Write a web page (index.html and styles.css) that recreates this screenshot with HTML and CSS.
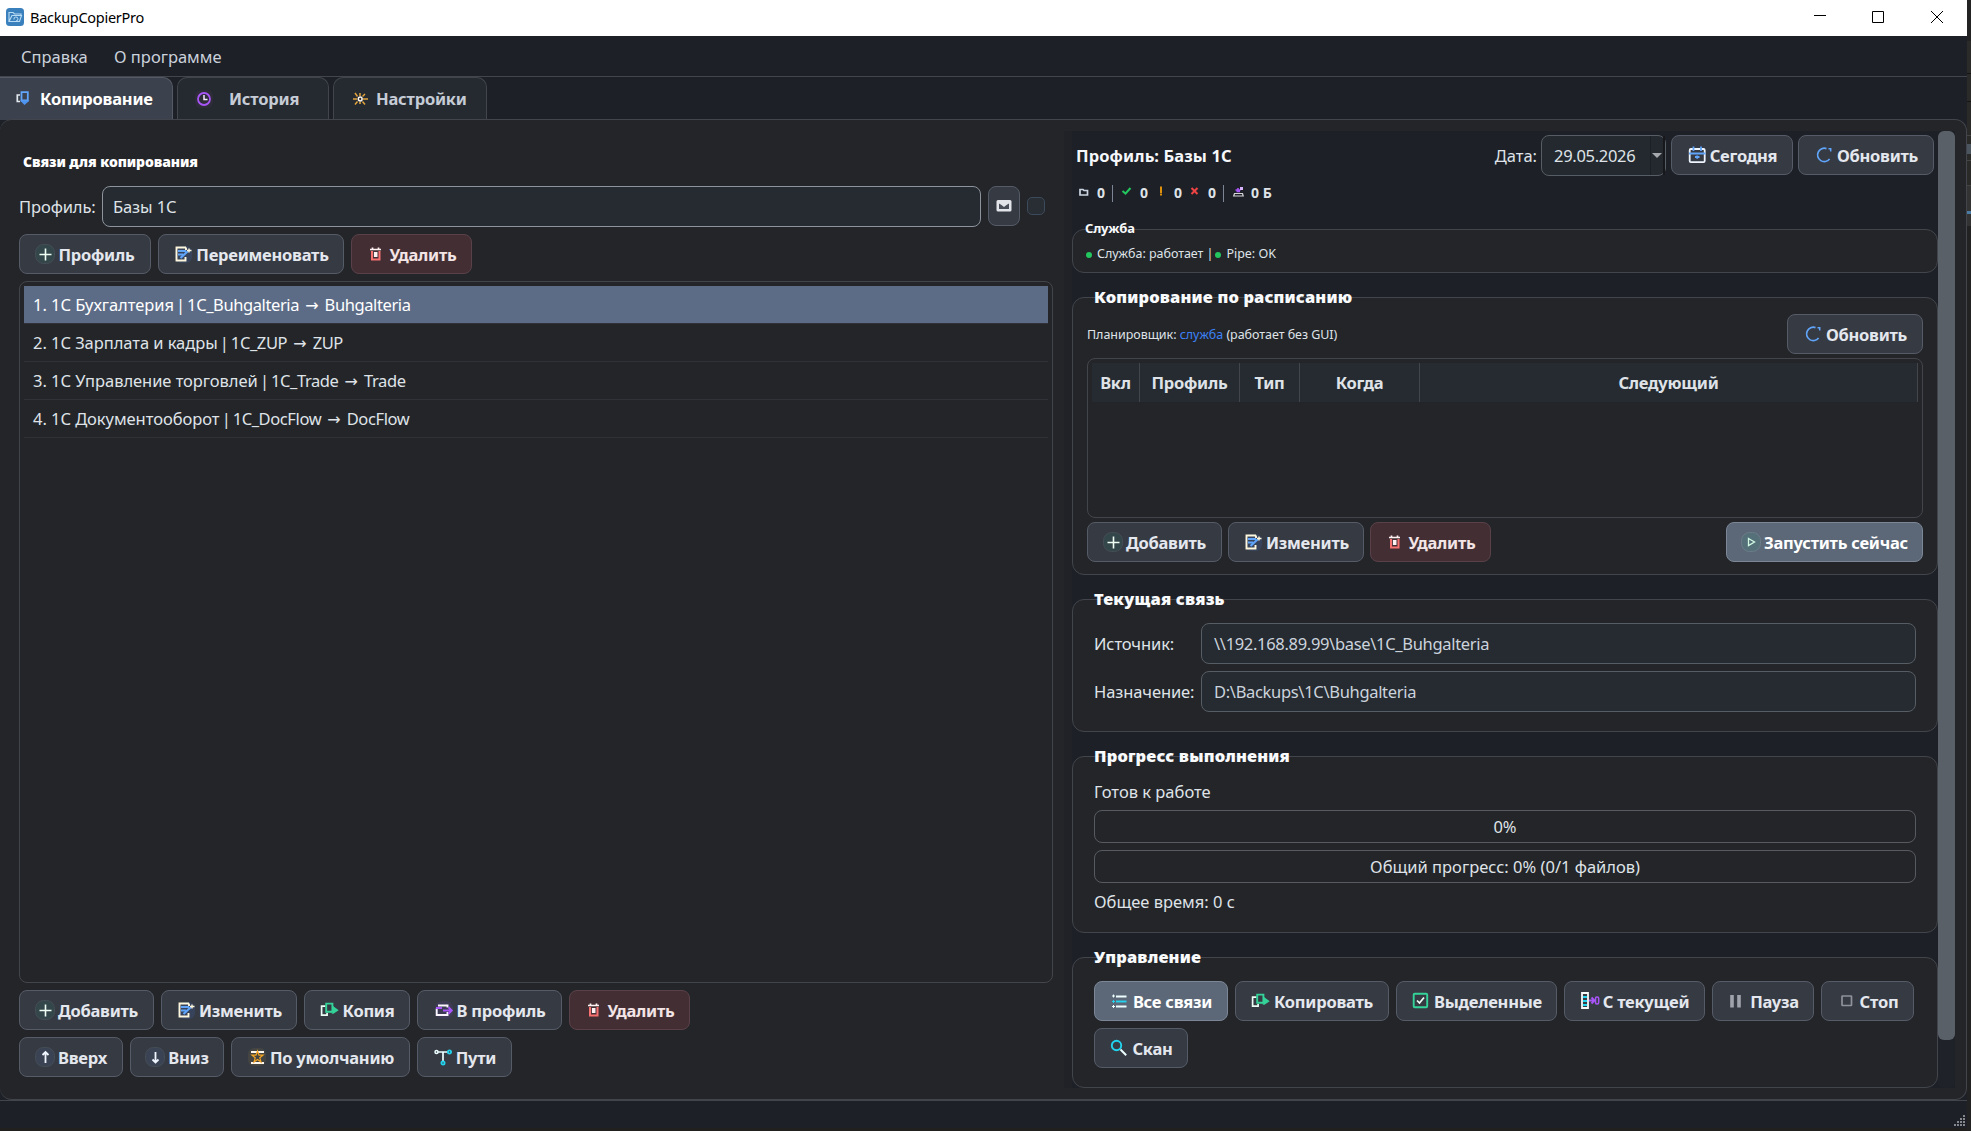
FILE: index.html
```html
<!DOCTYPE html>
<html lang="ru">
<head>
  <meta charset="UTF-8" />
  <title>BackupCopierPro</title>
  <link rel="stylesheet" href="styles.css">
</head>
<body>

  <svg class="sprite" aria-hidden="true">
    <symbol id="i-plus" viewBox="0 0 20 20"><rect x=".5" y=".5" width="19" height="19" rx="8" fill="#33464a" stroke="#454d55"/><path d="M4.500 10.500h12M10.500 4.500v12" stroke="#f0fdf4" stroke-width="1.600"/></symbol>
    <symbol id="i-edit" viewBox="0 0 20 20"><rect x="2" y="2" width="17" height="17" rx="6" fill="#37435a"/><path d="M13 3.500H3.500v13h9V13M13 3.500V6" fill="none" stroke="#fff7dc" stroke-width="1.900"/><path d="M5 7h8M5 10.500h5" stroke="#60a5fa" stroke-width="2"/><path d="M7.500 14l7.500-7" stroke="#60a5fa" stroke-width="2.200"/><path d="M14 6.500h4.500M16 4.500v4" stroke="#fff7dc" stroke-width="1.400"/></symbol>
    <symbol id="i-trash" viewBox="0 0 20 20"><path d="M4 5.500h11M6.500 3.500v2M12.500 3.500v2" stroke="#fff1f2" stroke-width="1.700"/><path d="M6 7v8.500h7.500V7" fill="none" stroke="#f87171" stroke-width="2"/><path d="M9.700 8v5" stroke="#fff1f2" stroke-width="3.600"/></symbol>
    <symbol id="i-copy" viewBox="0 0 20 20"><path d="M5.500 6.200H1.600v9h5.500v-2.500" fill="none" stroke="#ecfdf5" stroke-width="1.700"/><path d="M6.200 3.600h6.200v8.200H6.200z" fill="none" stroke="#34d399" stroke-width="1.900"/><path d="M13 6l5.700 4.300-5.700 3.700-2.500-1.500h2.500z" fill="#34d399"/></symbol>
    <symbol id="i-move" viewBox="0 0 20 20"><rect x="1" y="1" width="18" height="18" rx="7" fill="#3d3c54"/><path d="M4 5.500h9.500v2M2.700 8.500v6.500h10.800v-3" fill="none" stroke="#faf5ff" stroke-width="1.900"/><path d="M2 8h6M9 10.500h9M14.500 7.300l3.200 3.200-3.200 3.200" fill="none" stroke="#a855f7" stroke-width="2"/></symbol>
    <symbol id="i-up" viewBox="0 0 20 20"><rect x=".5" y=".5" width="19" height="19" rx="8" fill="#3a4354" stroke="#454d55"/><path d="M10.500 16V5M7.500 8l3-3 3 3" fill="none" stroke="#f0f6ff" stroke-width="1.800"/></symbol>
    <symbol id="i-down" viewBox="0 0 20 20"><rect x=".5" y=".5" width="19" height="19" rx="8" fill="#3a4354" stroke="#454d55"/><path d="M10.500 5v11M7.500 12.500l3 3 3-3" fill="none" stroke="#f0f6ff" stroke-width="1.800"/></symbol>
    <symbol id="i-default" viewBox="0 0 20 20"><rect x="1" y="1" width="18" height="18" rx="6" fill="#444443"/><path d="M4 5h13M4 16h13" stroke="#fff7ed" stroke-width="1.800"/><path d="M10.500 4l1.500 4.200h4l-3.200 2.600 1.200 4.200-3.500-2.500L7 15l1.200-4.200L5 8.200h4z" fill="#444443" stroke="#f5a524" stroke-width="1.200"/></symbol>
    <symbol id="i-paths" viewBox="0 0 20 20"><path d="M3 5h14M10 5v10" stroke="#ecfeff" stroke-width="1.700"/><circle cx="3.500" cy="5" r="1.500" fill="#363a43" stroke="#ecfeff" stroke-width="1.500"/><circle cx="16.500" cy="5" r="1.600" fill="#363a43" stroke="#22d3ee" stroke-width="1.800"/><circle cx="10" cy="16" r="1.600" fill="#363a43" stroke="#22d3ee" stroke-width="1.800"/></symbol>
    <symbol id="i-calendar" viewBox="0 0 20 20"><rect x="2.700" y="4" width="15" height="13.200" rx="1.200" fill="none" stroke="#eff6ff" stroke-width="1.800"/><path d="M6.500 1.500V6M14 1.500V6M2 8.500h16.500M8 12h4.500M10.200 10.500v3.200" stroke="#60a5fa" stroke-width="1.800"/></symbol>
    <symbol id="i-refresh" viewBox="0 0 20 20"><path d="M12.500 3.600A6.700 6.700 0 1 0 15.600 14" fill="none" stroke="#60a5fa" stroke-width="1.700"/><path d="M14.500 3.800h2.200v2.700" fill="none" stroke="#60a5fa" stroke-width="1.500"/></symbol>
    <symbol id="i-play" viewBox="0 0 20 20"><rect x=".5" y=".5" width="19" height="19" rx="8" fill="#557078" stroke="#6b7c88"/><path d="M7.500 6.500l6 3.500-6 3.500z" fill="#557078" stroke="#d1fae5" stroke-width="1.300"/></symbol>
    <symbol id="i-list" viewBox="0 0 20 20"><path d="M6 5.500h10.500M6 15.500h10.500" stroke="#ecfeff" stroke-width="1.900"/><path d="M6 10.500h10.500" stroke="#22d3ee" stroke-width="1.900"/><path d="M2 5h3M3.500 3.500v3M2 15.500h3M3.500 14v3" stroke="#ecfeff"/><path d="M2 10.500h3M3.500 9v3" stroke="#22d3ee"/></symbol>
    <symbol id="i-checkbox" viewBox="0 0 20 20"><rect x="2.700" y="2.700" width="13.500" height="13.500" rx="1" fill="none" stroke="#34d399" stroke-width="1.900"/><path d="M6 9.500l2.500 2.500L13 6.500" fill="none" stroke="#ecfdf5" stroke-width="1.700"/></symbol>
    <symbol id="i-current" viewBox="0 0 20 20"><path d="M2 2h6v15H2z" fill="#363a43" stroke="#f8fafc" stroke-width="1.800"/><path d="M3 6h4M3 10h4M3 14h4" stroke="#22d3ee" stroke-width="2"/><path d="M9 9.500h6M11.500 6.500l3 3-3 3" fill="none" stroke="#a855f7" stroke-width="1.900"/><rect x="15.500" y="6" width="3.200" height="7" rx="1.500" fill="none" stroke="#a855f7" stroke-width="1.500"/></symbol>
    <symbol id="i-pause" viewBox="0 0 20 20"><path d="M5 4v12.500M12 4v12.500" stroke="#a0a3ab" stroke-width="3.600" stroke-linecap="butt"/></symbol>
    <symbol id="i-stop" viewBox="0 0 20 20"><rect x="5" y="5" width="9.500" height="9.500" rx=".5" fill="none" stroke="#8f929b" stroke-width="1.700"/></symbol>
    <symbol id="i-search" viewBox="0 0 20 20"><circle cx="7.500" cy="7.500" r="4.700" fill="none" stroke="#22d3ee" stroke-width="1.900"/><path d="M11.500 11.500l5.700 5.700" stroke="#ecfeff" stroke-width="2"/></symbol>
    <symbol id="i-mail" viewBox="0 0 20 20"><rect x="2.500" y="4" width="15" height="11.500" rx="1.500" fill="#e2e4ea"/><path d="M5 7.500l2.500 1.500L10 11l2.500-2L15 7.500v5.500H5z" fill="#4a4e58"/></symbol>
    <symbol id="i-tab-copy" viewBox="0 0 20 20"><path d="M7 7H4.300v6.500H7" fill="none" stroke="#e2e8f0" stroke-width="1.700"/><path d="M8.500 4.200h6.300v8.300H8.500z" fill="none" stroke="#60a5fa" stroke-width="1.800"/><path d="M7 12.500h9.500L11.500 17z" fill="#4f93f0"/></symbol>
    <symbol id="i-history" viewBox="0 0 20 20"><rect x="1" y="1" width="18" height="18" rx="6" fill="#2e2c38"/><circle cx="10" cy="10" r="6" fill="none" stroke="#a855f7" stroke-width="1.800"/><path d="M10 6v4.500h3.500" fill="none" stroke="#f3e8ff" stroke-width="1.500"/></symbol>
    <symbol id="i-settings" viewBox="0 0 20 20"><path d="M10 7V4M10 13v2M7 10H3M13 10h5M7.500 7.500l-2.500-3.500M12.500 7.500l2.500-2.500M7.500 12.500l-2.500 3M12.500 12.500l2.500 3" stroke="#e0a23c" stroke-width="1.500"/><circle cx="10.200" cy="10" r="1.900" fill="#252a31" stroke="#fff7ed" stroke-width="1.500"/></symbol>
  </svg>

  <div class="desktop">
    <div class="window">
      <header class="titlebar">
        <svg class="app-icon" viewBox="0 0 18 18"><rect width="18" height="18" rx="3.500" fill="#3a80bd"/><path d="M3 13.500V4.500h4l1.500 1.500H15v2M3 13.500l3-6h9.500l-2 6z" fill="none" stroke="#b9dcf5" stroke-width="1.100"/><path d="M8 11.500a2 2 0 1 1 2 1.500" fill="none" stroke="#b9dcf5"/></svg>
        <span class="app-name">BackupCopierPro</span>
        <div class="window-controls">
          <svg viewBox="0 0 12 12"><path d="M0 4.500h12" /></svg>
          <svg viewBox="0 0 12 12"><path d="M.5 .5h11v11H.5z" /></svg>
          <svg viewBox="0 0 12 12"><path d="M0 0l12 12M12 0L0 12" /></svg>
        </div>
      </header>

      <nav class="menubar">
        <span class="menu-help">Справка</span>
        <span class="menu-about">О программе</span>
      </nav>

      <div class="tabs">
        <div class="tab tab-copy active"><svg class="icon"><use href="#i-tab-copy"/></svg><span>Копирование</span></div>
        <div class="tab tab-history"><svg class="icon"><use href="#i-history"/></svg><span>История</span></div>
        <div class="tab tab-settings"><svg class="icon"><use href="#i-settings"/></svg><span>Настройки</span></div>
      </div>

      <main class="page">
        <section class="links">
          <h1 class="links-title">Связи для копирования</h1>
          <div class="profile-row">
            <label>Профиль:</label>
            <div class="field profile-select">Базы 1С</div>
            <button class="btn btn-mail"><svg class="icon"><use href="#i-mail"/></svg></button>
            <span class="checkbox"></span>
          </div>
          <div class="btn-row">
            <button class="btn" style="width:132px"><svg class="icon"><use href="#i-plus"/></svg>Профиль</button>
            <button class="btn" style="width:186px"><svg class="icon"><use href="#i-edit"/></svg>Переименовать</button>
            <button class="btn danger" style="width:121px"><svg class="icon"><use href="#i-trash"/></svg>Удалить</button>
          </div>
          <ul class="link-list">
            <li class="selected">1. 1С Бухгалтерия <i>|</i> <span>1C_Buhgalteria</span> <b>→</b> <span>Buhgalteria</span></li>
            <li>2. 1С Зарплата и кадры <i>|</i> <span>1C_ZUP</span> <b>→</b> <span>ZUP</span></li>
            <li>3. 1С Управление торговлей <i>|</i> <span>1C_Trade</span> <b>→</b> <span>Trade</span></li>
            <li>4. 1С Документооборот <i>|</i> <span>1C_DocFlow</span> <b>→</b> <span>DocFlow</span></li>
          </ul>
          <div class="btn-row">
            <button class="btn" style="width:135px"><svg class="icon"><use href="#i-plus"/></svg>Добавить</button>
            <button class="btn" style="width:136px"><svg class="icon"><use href="#i-edit"/></svg>Изменить</button>
            <button class="btn" style="width:106px"><svg class="icon"><use href="#i-copy"/></svg>Копия</button>
            <button class="btn" style="width:145px"><svg class="icon"><use href="#i-move"/></svg>В профиль</button>
            <button class="btn danger" style="width:121px"><svg class="icon"><use href="#i-trash"/></svg>Удалить</button>
          </div>
          <div class="btn-row">
            <button class="btn" style="width:104px"><svg class="icon"><use href="#i-up"/></svg>Вверх</button>
            <button class="btn" style="width:94px"><svg class="icon"><use href="#i-down"/></svg>Вниз</button>
            <button class="btn" style="width:179px"><svg class="icon"><use href="#i-default"/></svg>По умолчанию</button>
            <button class="btn" style="width:95px"><svg class="icon"><use href="#i-paths"/></svg>Пути</button>
          </div>
        </section>

        <section class="details">
          <div class="details-content">
            <div class="details-head">
              <h2 class="profile-name">Профиль: Базы 1С</h2>
              <label>Дата:</label>
              <div class="field date-field"><span>29.05.2026</span><i class="date-drop"></i></div>
              <button class="btn" style="width:122px"><svg class="icon"><use href="#i-calendar"/></svg>Сегодня</button>
              <button class="btn" style="width:136px"><svg class="icon"><use href="#i-refresh"/></svg>Обновить</button>
            </div>

            <div class="stats">
              <svg viewBox="0 0 14 14"><path d="M2 4.500V10h7.500V5.500H6L5 4.500z" fill="none" stroke="#cbd5e1" stroke-width="1.700"/></svg>
              <b>0</b>
              <i class="sep"></i>
              <svg viewBox="0 0 14 14"><path d="M1.500 6l3 2.500 5-5.500" fill="none" stroke="#22c55e" stroke-width="2"/></svg>
              <b>0</b>
              <svg viewBox="0 0 14 14"><path d="M4 1.500v6.500M4 8.500v2" stroke="#f59e0b" stroke-width="1.800"/></svg>
              <b>0</b>
              <svg viewBox="0 0 14 14"><path d="M1.500 3l6 6M7.500 3l-6 6" stroke="#ef4444" stroke-width="2"/></svg>
              <b>0</b>
              <i class="sep"></i>
              <svg viewBox="0 0 14 14"><path d="M2.500 8.500h8l.7 2.500H1.700z" fill="none" stroke="#d4d4d8" stroke-width="1.200"/><path d="M3.500 5h5M6 3v4M8 6.500H4.500" stroke="#a855f7" stroke-width="1.600"/><path d="M8 2h3v3H8z" fill="#d8b4fe"/></svg>
              <b>0 Б</b>
            </div>

            <div class="group group-service">
              <h3>Служба</h3>
              <p><i class="dot"></i><span>Служба: работает |</span><i class="dot"></i><span>Pipe: OK</span></p>
            </div>

            <div class="group group-schedule">
              <h3>Копирование по расписанию</h3>
              <div class="schedule-head">
                <p>Планировщик: <a>служба</a> (работает без GUI)</p>
                <button class="btn" style="width:136px"><svg class="icon"><use href="#i-refresh"/></svg>Обновить</button>
              </div>
              <div class="schedule-table">
                <div class="table-head">
                  <span>Вкл</span><span>Профиль</span><span>Тип</span><span>Когда</span><span>Следующий</span>
                </div>
              </div>
              <div class="btn-row">
                <button class="btn" style="width:135px"><svg class="icon"><use href="#i-plus"/></svg>Добавить</button>
                <button class="btn" style="width:136px"><svg class="icon"><use href="#i-edit"/></svg>Изменить</button>
                <button class="btn danger" style="width:121px"><svg class="icon"><use href="#i-trash"/></svg>Удалить</button>
                <button class="btn primary run-now" style="width:197px"><svg class="icon"><use href="#i-play"/></svg>Запустить сейчас</button>
              </div>
            </div>

            <div class="group group-link">
              <h3>Текущая связь</h3>
              <div class="path-form">
                <label>Источник:</label>
                <div class="field">\\192.168.89.99\base\1C_Buhgalteria</div>
                <label>Назначение:</label>
                <div class="field">D:\Backups\1C\Buhgalteria</div>
              </div>
            </div>

            <div class="group group-progress">
              <h3>Прогресс выполнения</h3>
              <p class="status">Готов к работе</p>
              <div class="progress">0%</div>
              <div class="progress">Общий прогресс: 0% (0/1 файлов)</div>
              <p class="time">Общее время: 0 с</p>
            </div>

            <div class="group group-control">
              <h3>Управление</h3>
              <div class="btn-row">
                <button class="btn primary" style="width:134px"><svg class="icon"><use href="#i-list"/></svg>Все связи</button>
                <button class="btn" style="width:154px"><svg class="icon"><use href="#i-copy"/></svg>Копировать</button>
                <button class="btn" style="width:161px"><svg class="icon"><use href="#i-checkbox"/></svg>Выделенные</button>
                <button class="btn" style="width:141px"><svg class="icon"><use href="#i-current"/></svg>С текущей</button>
                <button class="btn" style="width:102px"><svg class="icon"><use href="#i-pause"/></svg>Пауза</button>
                <button class="btn" style="width:93px"><svg class="icon"><use href="#i-stop"/></svg>Стоп</button>
                <button class="btn" style="width:94px"><svg class="icon"><use href="#i-search"/></svg>Скан</button>
              </div>
            </div>
          </div>
          <div class="scrollbar"><div class="thumb"></div></div>
        </section>
      </main>

      <footer class="statusbar">
        <svg class="grip" viewBox="0 0 12 12"><path d="M9 1h2M6 4h2M9 4h2M3 7h2M6 7h2M9 7h2M0 10h2M3 10h2M6 10h2M9 10h2" stroke="#85878c" stroke-width="2"/></svg>
      </footer>
    </div>
    <div class="behind"></div>
  </div>

</body>
</html>
```
FILE: styles.css
```css
* { box-sizing: border-box; }
body { margin: 0; background: #221f1f; color: #dfe3e8; font-family: "Noto Sans", "Open Sans", sans-serif; font-size: 16.5px; overflow: hidden; }
h1, h2, h3, p, ul { margin: 0; padding: 0; }
.sprite { display: none; }
.icon { width: 20px; height: 20px; flex: none; }

.desktop { display: flex; height: 1131px; }
.window { width: 1967px; height: 1128px; display: flex; flex-direction: column; background: #1d2027; }
.behind { width: 4px; height: 1131px; background: linear-gradient(#232323 0 41px, #2b2b2a 41px 73px, #161616 73px 74px, #2b2b2a 74px 101px, #161616 101px 102px, #2a2a29 102px 135px, #444 135px 136px, #2a2a29 136px 144px, #4a5560 144px 154px, #2a2a29 154px 160px, #444 160px 161px, #2a2a29 161px 185px, #444 185px 186px, #333 186px 211px, #4a7ba5 211px 214px, #333 214px 226px, #222 226px); }

/* title bar and menu */
.titlebar { height: 36px; flex: none; background: #fff; color: #000; display: flex; align-items: center; padding: 0 24px 2px 6px; }
.app-icon { width: 18px; height: 18px; }
.app-name { margin-left: 6px; font-size: 14.5px; letter-spacing: -0.28px; }
.window-controls { margin-left: auto; display: flex; gap: 47px; }
.window-controls svg { width: 12px; height: 12px; fill: none; stroke: #000; overflow: visible; }
.window-controls svg:nth-child(2) { margin-left: -1px; }
.menubar { height: 41px; flex: none; border-bottom: 1px solid #42454b; display: flex; align-items: center; padding-left: 21px; color: #cbd2dc; }
.menubar span { white-space: nowrap; }
.menu-help { width: 93px; }

.tabs { display: flex; gap: 4px; height: 42px; flex: none; }
.tab { display: flex; align-items: center; height: 42px; border: 1px solid #42464c; border-bottom: none; border-radius: 10px 10px 0 0; background: #252a31; color: #c6ccd6; font-weight: 700; font-size: 16.5px; letter-spacing: -0.22px; white-space: nowrap; }
.tab.active { background: #3c424d; border-color: #555b66; color: #fff; height: 43px; border-left: none; border-top-left-radius: 0; padding-bottom: 2px; }
.tab-copy { width: 173px; padding-left: 13px; gap: 7px; }
.tab-history { width: 152px; padding-left: 16px; gap: 15px; }
.tab-settings { width: 154px; padding-left: 16px; gap: 6px; }

.page { flex: 1; display: flex; background: #242529; border: 1px solid #42454b; border-left: none; border-radius: 12px; padding: 11px 11px 11px 19px; min-height: 0; }

/* buttons and fields */
.btn { height: 40px; display: inline-flex; align-items: center; justify-content: center; gap: 3px; padding: 0; border: 1px solid #555c67; border-radius: 8px; background: #363a43; color: #e4e8ee; font-family: inherit; font-size: 16.5px; font-weight: 700; letter-spacing: -0.25px; white-space: nowrap; flex: none; }
.btn.danger { background: #432f33; border-color: #5a4149; color: #f3e4e6; }
.btn.primary { background: #5c6878; border-color: #7b8797; color: #fff; }
.btn-row { display: flex; flex-wrap: wrap; gap: 7px; }
.field { height: 41px; display: flex; align-items: center; border: 1px solid #575d64; border-radius: 8px; background: #252b31; padding-left: 12px; white-space: nowrap; }

/* left column */
.links { width: 1034px; display: flex; flex-direction: column; }
.links-title { height: 22px; margin: 20px 0 13px 4px; line-height: 22px; font-size: 14px; font-weight: 900; letter-spacing: -0.1px; color: #fff; }
.profile-row { display: flex; height: 41px; margin-bottom: 7px; }
.profile-row label { width: 83px; line-height: 41px; letter-spacing: -0.1px; }
.profile-select { width: 879px; border-color: #8d949d; padding-left: 10px; letter-spacing: -0.1px; }
.btn-mail { width: 32px; margin: 0 7px; }
.checkbox { width: 18px; height: 18px; margin-top: 11px; border: 1px solid #3c4a5c; border-radius: 5px; background: #292e35; }
.link-list { list-style: none; height: 702px; margin: 7px 0; padding: 4px; border: 1px solid #42454b; border-radius: 8px; }
.link-list li { height: 38px; line-height: 37px; padding-left: 9px; border-bottom: 1px solid #303238; letter-spacing: -0.05px; }
.link-list li span { letter-spacing: -0.4px; }
.link-list li i { margin: 0 -2.3px 0 -2px; font-style: normal; }
.link-list li b { display: inline-block; width: 17px; line-height: 20px; text-align: center; font-family: "DejaVu Sans", sans-serif; font-size: 16px; font-weight: 400; }
.link-list .selected { background: #5c6c87; color: #fff; }
.links .btn-row + .btn-row { margin-top: 7px; }

/* right column */
.details { display: flex; width: 891px; margin-left: 11px; background: #1d2027; border-left: 8px solid #202228; }
.details-content { width: 866px; }
.details-head { display: flex; align-items: center; height: 41px; margin-top: 4px; padding: 0 4px; }
.profile-name { flex: 1; font-size: 16.5px; font-weight: 700; color: #f5f7fa; letter-spacing: 0.1px; }
.details-head .btn { align-self: flex-start; }
.details-head .btn + .btn { margin-left: 5px; }
.date-field { width: 125px; margin: 0 5px 0 4px; padding-left: 12px; justify-content: space-between; background: #24292f; letter-spacing: -0.3px; }
.date-drop { width: 15px; height: 39px; border-right: 2px solid #16181b; border-left: 1px solid #1c1f23; display: flex; align-items: center; justify-content: center; }
.date-drop::after { content: ""; border: 5px solid transparent; border-top-color: #a5a8ac; border-bottom: none; }
.stats { display: grid; grid-template-columns: 19px 15px 9px 19px 17px 17px 16px 18px 15px 9px 19px auto; align-items: center; height: 20px; margin: 6px 0 0 6px; font-size: 14px; }
.stats svg { width: 14px; height: 14px; }
.stats b { font-weight: 700; white-space: nowrap; }
.sep { width: 1px; height: 17px; background: #7d8594; margin-top: 3px; }

.group { border: 1px solid #42454b; border-radius: 12px; background: #242529; padding: 0 21px; }
.group h3 { height: 24px; line-height: 24px; margin-top: -13px; font-size: 16.5px; font-weight: 900; letter-spacing: 0.15px; color: #f8fafc; white-space: nowrap; }
.group-service { height: 44px; margin-top: 27px; padding: 0 12px; }
.group-service h3 { font-size: 13px; font-weight: 700; line-height: 23px; letter-spacing: -0.2px; }
.group-service p { display: flex; align-items: center; height: 24px; margin-top: 0; font-size: 12.5px; letter-spacing: -0.03px; }
.dot { width: 6px; height: 6px; border-radius: 3px; background: #22c55e; margin: 4px 5px 0 1px; }
.group-service span + .dot { margin-left: 2px; }
.group-schedule { height: 278px; margin-top: 24px; padding: 0 14px; }
.group-schedule h3 { padding-left: 7px; }
.group-schedule .btn-row { gap: 6px; }
.schedule-head { display: flex; justify-content: space-between; align-items: center; margin-top: 5px; font-size: 12.5px; letter-spacing: -0.04px; }
.schedule-head a { color: #3b82f6; }
.schedule-table { height: 160px; margin: 4px 0; padding: 4px; border: 1px solid #42454b; border-radius: 8px; }
.table-head { display: grid; grid-template-columns: 48px 100px 60px 120px 1fr; height: 39px; line-height: 39px; background: #262b31; text-align: center; font-weight: 700; letter-spacing: -0.25px; }
.table-head span { border-right: 1px solid #42464c; }
.run-now { margin-left: auto; }
.group-link { height: 133px; margin-top: 24px; }
.path-form { display: grid; grid-template-columns: 107px 715px; gap: 7px 0; margin-top: 12px; align-items: center; letter-spacing: -0.1px; }
.path-form .field { color: #ccd3dd; letter-spacing: -0.32px; }
.group-progress { height: 177px; margin-top: 24px; }
.status { height: 24px; line-height: 24px; margin: 12px 0 6px; }
.progress { width: 822px; height: 33px; line-height: 31px; margin-bottom: 7px; border: 1px solid #575b61; border-radius: 8px; text-align: center; }
.time { line-height: 24px; }
.group-control { height: 131px; margin-top: 24px; }
.group-control .btn-row { margin-top: 12px; }
.scrollbar { width: 17px; background: #202229; border-radius: 6px; }
.thumb { height: 909px; border-radius: 6px; background: #5a6068; }

.statusbar { height: 28px; flex: none; border-top: 1px solid #42454b; display: flex; justify-content: flex-end; align-items: flex-end; padding: 0 1px 1px 0; }
.grip { width: 12px; height: 12px; }
```
